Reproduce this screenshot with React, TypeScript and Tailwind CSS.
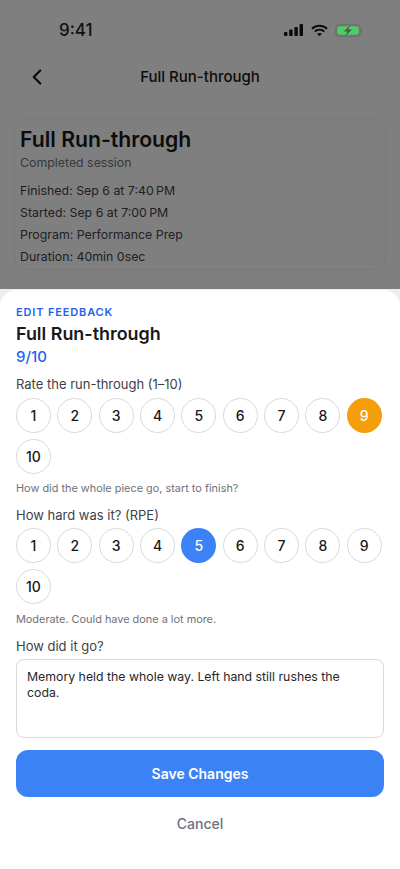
import { ChevronLeft } from "lucide-react";

const scale = [1, 2, 3, 4, 5, 6, 7, 8, 9, 10];

function StatusIcons() {
  return (
    <div className="flex items-center gap-[7px]">
      <svg width="20" height="12" viewBox="0 0 20 12" fill="#0b0b0b">
        <rect x="0" y="8" width="3.4" height="4" rx="0.8" />
        <rect x="5.2" y="5.6" width="3.4" height="6.4" rx="0.8" />
        <rect x="10.4" y="3" width="3.4" height="9" rx="0.8" />
        <rect x="15.6" y="0" width="3.4" height="12" rx="0.8" />
      </svg>
      <svg width="17" height="13" viewBox="0 0 18 13" fill="none" stroke="#0b0b0b" strokeWidth="2">
        <path d="M1 4.6C5.6 0.4 12.4 0.4 17 4.6" />
        <path d="M3.9 7.6C6.9 5 11.1 5 14.1 7.6" />
        <path d="M9 12.6L6.4 9.9C7.9 8.8 10.1 8.8 11.6 9.9Z" fill="#0b0b0b" stroke="none" />
      </svg>
      <svg width="28" height="13" viewBox="0 0 28 13">
        <rect x="0.75" y="0.75" width="24.5" height="11.5" rx="3.5" fill="none" stroke="#6a746b" strokeWidth="1.5" />
        <rect x="2.5" y="2.5" width="21" height="8" rx="2" fill="#4bd063" />
        <path d="M26.2 4.4c1 .3 1.6 1.1 1.6 2.1s-.6 1.8-1.6 2.1z" fill="#6a746b" />
        <path d="M15 1.2L8.6 7.4h3.6l-1.6 4.4 6.6-6.4h-3.8z" fill="#4f5b51" />
      </svg>
    </div>
  );
}

function ScaleRow({ selected, selectedClass }: { selected: number; selectedClass: string }) {
  return (
    <div className="mt-[5px] flex flex-wrap gap-x-[6.33px] gap-y-[6px]">
      {scale.map((n) => (
        <div
          key={n}
          className={
            n === selected
              ? `flex h-[35px] w-[35px] items-center justify-center rounded-full text-[14px] font-medium text-white ${selectedClass}`
              : "flex h-[35px] w-[35px] items-center justify-center rounded-full border border-[#d9d9dc] bg-white text-[14px] font-medium text-[#18181b]"
          }
        >
          {n}
        </div>
      ))}
    </div>
  );
}

export default function App() {
  return (
    <div className="relative h-[869px] w-[400px] overflow-hidden bg-white font-['Inter',sans-serif]">
      <div className="h-[54px]" />
      <div className="relative flex h-[46px] items-center justify-center">
        <ChevronLeft className="absolute left-[24px] h-[26px] w-[26px] text-[#111]" strokeWidth={2} />
        <span className="text-[15px] font-medium text-[#18181b]">Full Run-through</span>
      </div>
      <div className="mx-[14px] mt-[18px] h-[152px] rounded-[12px] border border-[#f0f0f2] px-[5px] pt-[2px]">
        <h1 className="text-[21.2px] leading-[36px] font-semibold text-[#18181b]">Full Run-through</h1>
        <p className="-mt-[2px] text-[12.35px] leading-[16px] text-[#6b7280]">Completed session</p>
        <div className="mt-[11px] flex flex-col gap-[4px] text-[12.35px] leading-[18px] text-[#3f3f46]">
          <p>Finished: Sep 6 at 7:40{"\u202f"}PM</p>
          <p>Started: Sep 6 at 7:00{"\u202f"}PM</p>
          <p>Program: Performance Prep</p>
          <p>Duration: 40min 0sec</p>
        </div>
      </div>

      <div className="absolute inset-0 bg-black/50" />

      {/* status bar stays above the dim layer */}
      <div className="absolute inset-x-0 top-0 flex items-center justify-between pt-[19px] pl-[59px] pr-[37px]">
        <span className="text-[17px] leading-[22px] font-medium text-[#111]">9:41</span>
        <StatusIcons />
      </div>

      <div className="absolute inset-x-0 top-[289px] bottom-0 bg-[#eeeeee] pt-[1px]">
        <div className="h-full rounded-t-[16px] bg-white px-[16px] pt-[15px]">
          <p className="text-[11px] leading-[14px] font-semibold tracking-[0.85px] text-[#2563eb]">EDIT FEEDBACK</p>
          <h2 className="mt-[3px] text-[17.9px] leading-[24px] font-semibold text-[#18181b]">Full Run-through</h2>
          <p className="mt-[1px] text-[15px] leading-[20px] font-medium text-[#2563eb]">9/10</p>

          <p className="mt-[8px] text-[13px] leading-[18px] font-normal text-[#3f3f46]">Rate the run-through (1–10)</p>
          <ScaleRow selected={9} selectedClass="bg-[#f59e0b]" />
          <p className="mt-[6px] text-[10.9px] leading-[16px] text-[#71717a]">How did the whole piece go, start to finish?</p>

          <p className="mt-[10px] -mb-[1px] text-[13px] leading-[18px] font-normal text-[#3f3f46]">How hard was it? (RPE)</p>
          <ScaleRow selected={5} selectedClass="bg-[#3b82f6]" />
          <p className="mt-[7px] text-[10.9px] leading-[16px] text-[#71717a]">Moderate. Could have done a lot more.</p>

          <p className="mt-[10px] text-[13px] leading-[18px] font-normal text-[#3f3f46]">How did it go?</p>
          <div className="mt-[4px] h-[79px] w-[368px] rounded-[8px] border border-[#d9d9dc] px-[10px] py-[9px] text-[12.3px] leading-[16px] text-[#27272a]">
            Memory held the whole way. Left hand still rushes the coda.
          </div>

          <button className="mt-[12px] flex h-[47px] w-[368px] items-center justify-center rounded-[12px] bg-[#3b82f6] text-[14px] font-semibold text-white">
            Save Changes
          </button>
          <button className="mt-[7px] flex h-[38px] w-[368px] items-center justify-center text-[14px] font-medium text-[#6b7280]">
            Cancel
          </button>
        </div>
      </div>
    </div>
  );
}
